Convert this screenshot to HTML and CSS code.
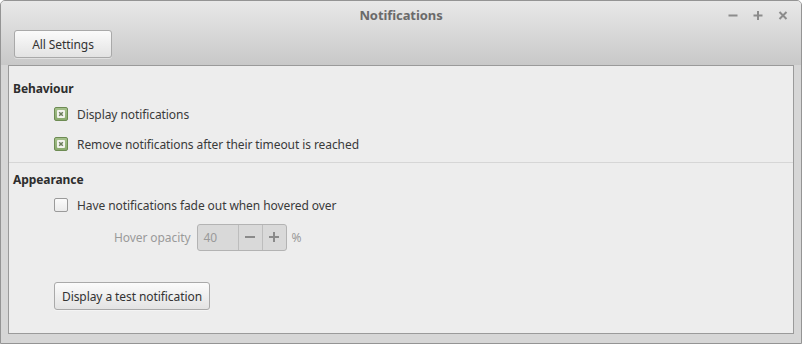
FILE: index.html
```html
<!DOCTYPE html>
<html lang="en">
<head>
    <meta charset="UTF-8">
    <title>Notifications</title>
    <link rel="stylesheet" href="styles.css">
</head>
<body>
    <div class="window">
        <div class="header">
            <div class="titlebar">
                <div></div>
                <div class="title">Notifications</div>
                <div class="controls">
                    <svg width="12" height="12" viewBox="0 0 12 12"><path d="M1.5 6.5h9" stroke="#8c8c8c" stroke-width="2"/></svg>
                    <svg width="12" height="12" viewBox="0 0 12 12"><path d="M1.5 6.5h9M6 2v9" stroke="#8c8c8c" stroke-width="2"/></svg>
                    <svg width="12" height="12" viewBox="0 0 12 12"><path d="M2.5 3l7 7M9.5 3l-7 7" stroke="#8c8c8c" stroke-width="2"/></svg>
                </div>
            </div>
            <div class="toolbar">
                <button class="btn btn-wide">All Settings</button>
            </div>
        </div>

        <div class="body">
            <div class="frame">
                <div class="section first">
                    <div class="heading">Behaviour</div>
                    <label class="row">
                        <span class="check on">
                            <svg width="14" height="14" viewBox="0 0 14 14"><rect x="3" y="3" width="8" height="8" rx="1" fill="#f3f3ef"/><path d="M5.2 5.2l3.6 3.6M8.8 5.2l-3.6 3.6" stroke="#6b7d5c" stroke-width="1.5"/></svg>
                        </span>
                        Display notifications
                    </label>
                    <label class="row">
                        <span class="check on">
                            <svg width="14" height="14" viewBox="0 0 14 14"><rect x="3" y="3" width="8" height="8" rx="1" fill="#f3f3ef"/><path d="M5.2 5.2l3.6 3.6M8.8 5.2l-3.6 3.6" stroke="#6b7d5c" stroke-width="1.5"/></svg>
                        </span>
                        Remove notifications after their timeout is reached
                    </label>
                </div>

                <div class="section">
                    <div class="heading">Appearance</div>
                    <label class="row">
                        <span class="check"></span>
                        Have notifications fade out when hovered over
                    </label>
                    <div class="row spin-row">
                        <span class="muted">Hover opacity</span>
                        <div class="spin">
                            <span class="spin-entry">40</span>
                            <span class="spin-btn">
                                <svg width="12" height="12" viewBox="0 0 12 12"><path d="M1 6h10" stroke="#8a8a8a" stroke-width="2"/></svg>
                            </span>
                            <span class="spin-btn">
                                <svg width="12" height="12" viewBox="0 0 12 12"><path d="M1 6h10M6 1v10" stroke="#8a8a8a" stroke-width="2"/></svg>
                            </span>
                        </div>
                        <span class="muted">%</span>
                    </div>
                    <div class="test-row">
                        <button class="btn">Display a test notification</button>
                    </div>
                </div>
            </div>
        </div>
    </div>
</body>
</html>
```

FILE: styles.css
```css
* {
    box-sizing: border-box;
}
body {
    margin: 0;
    width: 802px;
    height: 344px;
    font-family: "Noto Sans", sans-serif;
    font-size: 12px;
    letter-spacing: -0.08px;
    color: #3a3a3a;
    background-color: #ffffff;
}
.window {
    width: 802px;
    height: 344px;
    border: 1px solid #949494;
    border-radius: 5px 5px 0 0;
    background-color: #d6d6d6;
    display: flex;
    flex-direction: column;
    overflow: hidden;
}
.header {
    height: 64px;
    background: linear-gradient(#e8e8e8, #c8c8c8);
}
.titlebar {
    height: 28px;
    display: grid;
    grid-template-columns: 1fr auto 1fr;
    align-items: center;
}
.title {
    font-size: 13px;
    font-weight: bold;
    color: #6a6a6a;
}
.controls {
    display: flex;
    justify-content: flex-end;
    gap: 13px;
    padding-right: 12px;
}
.toolbar {
    padding-left: 13px;
    padding-top: 1px;
}
.btn {
    font-family: "Noto Sans", sans-serif;
    font-size: 12px;
    letter-spacing: -0.08px;
    color: #333333;
    height: 28px;
    padding: 0 7px;
    border: 1px solid #a9a9a9;
    border-radius: 3px;
    background: linear-gradient(#fbfbfb, #e3e3e3);
    box-shadow: 0 1px 0 rgba(255, 255, 255, 0.4);
}
.btn-wide {
    width: 98px;
}
.body {
    flex: 1;
    padding: 0 7px 9px 7px;
}
.frame {
    height: 100%;
    border: 1px solid #9a9a9a;
    background-color: #ededed;
}
.section {
    padding-top: 8px;
}
.section.first {
    padding-top: 14px;
    padding-bottom: 3px;
    border-bottom: 1px solid #d6d6d6;
}
.heading {
    font-weight: bold;
    color: #2e2e2e;
    line-height: 18px;
    padding-left: 4px;
    margin-bottom: 1px;
}
.row {
    display: flex;
    align-items: center;
    height: 30px;
    padding-left: 45px;
}
.check {
    width: 14px;
    height: 14px;
    margin-right: 9px;
    border: 1px solid #9a9a9a;
    border-radius: 2px;
    background: linear-gradient(#fbfbfb, #ebebeb);
    display: flex;
    flex-shrink: 0;
}
.check.on {
    border-color: #6d8b53;
    background: linear-gradient(#a5c18b, #8aa96e);
}
.check svg {
    margin: -1px;
}
.spin-row {
    height: 32px;
    margin-top: 1px;
    padding-left: 105px;
}
.muted {
    color: #9a9a9a;
}
.spin {
    display: flex;
    height: 27px;
    margin: 0 5px 0 6px;
    border: 1px solid #b3b3b3;
    border-radius: 3px;
    background-color: #d9d9d9;
}
.spin-entry {
    width: 40px;
    padding-left: 6px;
    line-height: 25px;
    color: #9a9a9a;
}
.spin-btn {
    width: 24px;
    border-left: 1px solid #bdbdbd;
    display: flex;
    align-items: center;
    justify-content: center;
}
.test-row {
    padding-left: 45px;
    margin-top: 29px;
}
```
